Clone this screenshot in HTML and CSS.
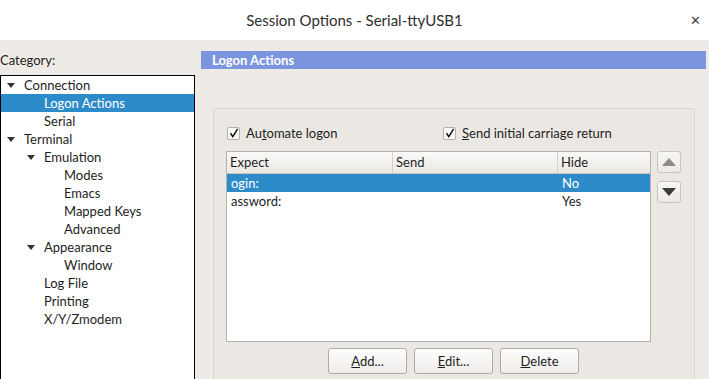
FILE: index.html
```html
<!DOCTYPE html>
<html lang="en">
<head>
    <meta charset="UTF-8">
    <meta name="viewport" content="width=device-width, initial-scale=1.0">
    <title>Session Options - Serial-ttyUSB1</title>
    <link rel="stylesheet" href="styles.css">
</head>
<body>

<div class="titlebar">
    <div class="title">Session Options - Serial-ttyUSB1</div>
    <div class="close">&#x2715;</div>
</div>

<div class="main">
    <!-- Category tree -->
    <div class="sidebar">
        <div class="category-label">Category:</div>
        <div class="tree">
            <div class="tree-row lvl0"><span class="arrow"></span>Connection</div>
            <div class="tree-row lvl1 selected">Logon Actions</div>
            <div class="tree-row lvl1">Serial</div>
            <div class="tree-row lvl0"><span class="arrow"></span>Terminal</div>
            <div class="tree-row lvl1"><span class="arrow"></span>Emulation</div>
            <div class="tree-row lvl2">Modes</div>
            <div class="tree-row lvl2">Emacs</div>
            <div class="tree-row lvl2">Mapped Keys</div>
            <div class="tree-row lvl2">Advanced</div>
            <div class="tree-row lvl1"><span class="arrow"></span>Appearance</div>
            <div class="tree-row lvl2">Window</div>
            <div class="tree-row lvl1">Log File</div>
            <div class="tree-row lvl1">Printing</div>
            <div class="tree-row lvl1">X/Y/Zmodem</div>
        </div>
    </div>

    <!-- Page content -->
    <div class="content">
        <div class="page-header">Logon Actions</div>

        <div class="group">
            <div class="check-row">
                <label class="check first">
                    <span class="box"><svg width="10" height="10" viewBox="0 0 10 10"><path d="M1.5 5.2 L3.8 8.6 L8.6 0.8" fill="none" stroke="#111" stroke-width="1.5"/></svg></span>
                    <span>Au<u>t</u>omate logon</span>
                </label>
                <label class="check">
                    <span class="box"><svg width="10" height="10" viewBox="0 0 10 10"><path d="M1.5 5.2 L3.8 8.6 L8.6 0.8" fill="none" stroke="#111" stroke-width="1.5"/></svg></span>
                    <span><u>S</u>end initial carriage return</span>
                </label>
            </div>

            <div class="table-row">
                <div class="table">
                    <div class="thead">
                        <div class="col c-expect">Expect</div>
                        <div class="col c-send">Send</div>
                        <div class="col c-hide">Hide</div>
                    </div>
                    <div class="trow selected">
                        <div class="col c-expect">ogin:</div>
                        <div class="col c-send"></div>
                        <div class="col c-hide">No</div>
                    </div>
                    <div class="trow">
                        <div class="col c-expect">assword:</div>
                        <div class="col c-send"></div>
                        <div class="col c-hide">Yes</div>
                    </div>
                </div>

                <div class="move-buttons">
                    <div class="move-btn"><svg width="14" height="8" viewBox="0 0 14 8"><path d="M0 8 L7 0 L14 8 Z" fill="#8c8c8c"/></svg></div>
                    <div class="move-btn"><svg width="14" height="8" viewBox="0 0 14 8"><path d="M0 0 L14 0 L7 8 Z" fill="#3c3c3c"/></svg></div>
                </div>
            </div>

            <div class="button-row">
                <button><u>A</u>dd...</button>
                <button><u>E</u>dit...</button>
                <button><u>D</u>elete</button>
            </div>
        </div>
    </div>
</div>

</body>
</html>
```

FILE: styles.css
```css
html, body {
    margin: 0;
    height: 379px;
    overflow: hidden;
}
body {
    font-family: Lato, "Open Sans", sans-serif;
    font-size: 13px;
    color: #1e1e1e;
    background-color: #eeebe7;
}
.titlebar {
    height: 40px;
    background-color: #ffffff;
    display: flex;
    align-items: center;
    justify-content: center;
    position: relative;
}
.title {
    font-size: 15px;
    color: #2e2e2e;
}
.close {
    position: absolute;
    right: 8px;
    top: 12px;
    font-size: 13px;
    color: #444;
}
.main {
    display: flex;
}
.sidebar {
    width: 195px;
}
.category-label {
    height: 35px;
    line-height: 40px;
}
.tree {
    background-color: #ffffff;
    border: 1px solid #000;
    border-bottom: none;
    height: 303px;
}
.tree-row {
    height: 18px;
    line-height: 18px;
    position: relative;
    white-space: nowrap;
}
.tree-row.lvl0 { padding-left: 23px; }
.tree-row.lvl1 { padding-left: 43px; }
.tree-row.lvl2 { padding-left: 63px; }
.tree-row.selected {
    background-color: #2e8bc9;
    color: #ffffff;
}
.arrow {
    position: absolute;
    top: 7px;
    width: 0;
    height: 0;
    border-left: 4px solid transparent;
    border-right: 4px solid transparent;
    border-top: 5px solid #333;
}
.lvl0 .arrow { left: 6px; }
.lvl1 .arrow { left: 26px; }
.content {
    margin-left: 6px;
    flex: 1;
}
.page-header {
    margin-top: 11px;
    width: 494px;
    height: 18px;
    line-height: 18px;
    padding-left: 11px;
    background-color: #7b96df;
    color: #ffffff;
    font-weight: bold;
}
.group {
    margin-top: 39px;
    margin-left: 12px;
    width: 482px;
    height: 271px;
    border: 1px solid #d9d5d1;
    border-bottom: none;
    border-radius: 2px 2px 0 0;
    background-color: #ebe8e4;
    padding-left: 12px;
    box-sizing: border-box;
}
.check-row {
    display: flex;
    padding-top: 17px;
    height: 14px;
}
.check {
    display: flex;
    align-items: center;
    gap: 6px;
    white-space: nowrap;
}
.check.first {
    width: 216px;
    padding-left: 1px;
}
.box {
    width: 11px;
    height: 11px;
    border: 1px solid #b3afab;
    border-radius: 2px;
    background-color: #fbfbfa;
    display: flex;
    align-items: center;
    justify-content: center;
}
.table-row {
    display: flex;
    gap: 6px;
    margin-top: 11px;
}
.table {
    width: 423px;
    height: 189px;
    border: 1px solid #b6b2ae;
    background-color: #ffffff;
}
.thead {
    display: flex;
    height: 21px;
    line-height: 21px;
    background: linear-gradient(#fbfaf9, #ebe8e4);
    border-bottom: 1px solid #c9c5c1;
}
.thead .col {
    border-right: 1px solid #d5d1cd;
}
.thead .col:last-child {
    border-right: none;
}
.col {
    box-sizing: border-box;
    padding-left: 3px;
}
.c-expect { width: 166px; }
.c-send { width: 165px; }
.c-hide { flex: 1; }
.trow {
    display: flex;
    height: 18px;
    line-height: 18px;
}
.trow .col { padding-left: 4px; }
.trow.selected {
    background-color: #2e8bc9;
    color: #ffffff;
}
.move-buttons {
    display: flex;
    flex-direction: column;
    gap: 8px;
}
.move-btn {
    width: 22px;
    height: 20px;
    border: 1px solid #c8c4c0;
    border-radius: 3px;
    background: linear-gradient(#f8f7f6, #ece9e6);
    display: flex;
    align-items: center;
    justify-content: center;
}
.button-row {
    display: flex;
    gap: 7px;
    margin-top: 6px;
    padding-left: 102px;
}
button {
    width: 79px;
    height: 26px;
    font-family: inherit;
    font-size: 13px;
    color: #1e1e1e;
    background: linear-gradient(#fdfdfd, #efedea);
    border: 1px solid #aeaaa6;
    border-radius: 3px;
    padding: 0;
}
```
